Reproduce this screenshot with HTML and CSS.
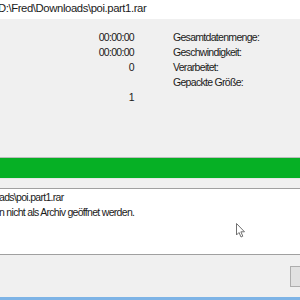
FILE: index.html
```html
<!DOCTYPE html>
<html>
<head>
<meta charset="utf-8">
<link rel="stylesheet" href="styles.css">
</head>
<body>
<div class="win">
  <div class="path"><span>D:\Fred\Downloads\poi.part1.rar</span></div>
  <div class="stats">
    <div class="vals">
      <div class="row">00:00:00</div>
      <div class="row">00:00:00</div>
      <div class="row">0</div>
      <div class="row"></div>
      <div class="row">1</div>
    </div>
    <div class="labels">
      <div class="row">Gesamtdatenmenge:</div>
      <div class="row">Geschwindigkeit:</div>
      <div class="row">Verarbeitet:</div>
      <div class="row">Gepackte Größe:</div>
    </div>
  </div>
  <div class="progress"><div class="fill"></div></div>
  <div class="spacer"></div>
  <div class="log">
    <div class="line">ads\poi.part1.rar</div>
    <div class="line">n nicht als Archiv geöffnet werden.</div>
    <svg class="cursor" width="10" height="16" viewBox="0 0 10 16">
      <path d="M0.5 0.5 L0.5 12 L3 9.5 L5 14 L6.8 13.2 L4.9 8.8 L8.5 8.8 Z" fill="#fff" stroke="#707070" stroke-width="1" stroke-linejoin="round"/>
    </svg>
  </div>
  <div class="footer">
    <div class="btn"></div>
  </div>
  <div class="blue"></div>
</div>
</body>
</html>
```
FILE: styles.css
```css
html, body {
  margin: 0;
  padding: 0;
  background: #f0f0f0;
}
body {
  width: 300px;
  height: 300px;
  overflow: hidden;
  font-family: "Liberation Sans", Arial, sans-serif;
  font-size: 10.5px;
  letter-spacing: -0.7px;
  color: #1a1a1a;
}
.win {
  display: flex;
  flex-direction: column;
  width: 300px;
}
.path {
  height: 19px;
  background: #fff;
  line-height: 16px;
  white-space: nowrap;
  font-size: 11.3px;
  letter-spacing: -0.4px;
}
.path span {
  display: block;
  margin-left: -2px;
}
.stats {
  height: 138px;
  background: #f0f0f0;
  display: flex;
  padding-top: 11px;
  box-sizing: border-box;
}
.vals {
  width: 134px;
  text-align: right;
}
.labels {
  margin-left: 39px;
}
.row {
  height: 15px;
  line-height: 15px;
  white-space: nowrap;
}
.progress {
  height: 22px;
  border-top: 1px solid #bcbcbc;
  border-bottom: 1px solid #e6e6e6;
  box-sizing: border-box;
  background: #06b025;
}
.fill {
  height: 100%;
}
.spacer {
  height: 9px;
}
.log {
  position: relative;
  height: 67px;
  background: #fff;
  border-top: 1px solid #a0a0a0;
  border-bottom: 1px solid #a0a0a0;
  box-sizing: border-box;
  padding-top: 1px;
}
.line {
  height: 15px;
  line-height: 15px;
  white-space: nowrap;
  margin-left: -1px;
}
.cursor {
  position: absolute;
  left: 236px;
  top: 34px;
}
.footer {
  height: 42px;
  background: #f0f0f0;
  padding-top: 11px;
  box-sizing: border-box;
  display: flex;
  justify-content: flex-end;
}
.btn {
  width: 20px;
  height: 21px;
  margin-right: -10px;
  border: 1px solid #adadad;
  background: #e1e1e1;
  box-sizing: border-box;
}
.blue {
  height: 4px;
  background: #7eb4e6;
}
```
